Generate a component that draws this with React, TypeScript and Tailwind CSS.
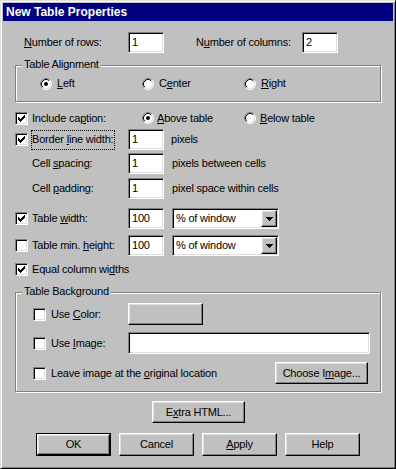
// App.tsx
// Win95-style "New Table Properties" dialog.

import React from "react";

const FONT = "font-['Liberation_Sans',Arial,sans-serif]";

// ── Shared bevel styles ──────────────────────────────────────────────────────
const field =
  "bg-white border border-t-[#808080] border-l-[#808080] border-r-white border-b-white shadow-[inset_1px_1px_0_#000,inset_-1px_-1px_0_#dfdfdf]";
const raised =
  "bg-[#c0c0c0] border border-t-white border-l-white border-r-black border-b-black shadow-[inset_-1px_-1px_0_#808080,inset_1px_1px_0_#dfdfdf]";

const CHECK = ["......#", ".....##", "#...###", "##.###.", "#####..", ".###...", "..#...."];

// ── Small pieces ─────────────────────────────────────────────────────────────
const U: React.FC<{ children: React.ReactNode }> = ({ children }) => (
  <span className="underline underline-offset-[1px]">{children}</span>
);

const CheckBox: React.FC<{ checked?: boolean }> = ({ checked }) => (
  <div className={`w-[13px] h-[13px] shrink-0 flex items-center justify-center ${field}`}>
    {checked && (
      <svg width="7" height="7" viewBox="0 0 7 7" shapeRendering="crispEdges">
        {CHECK.map((row, y) =>
          row.split("").map((c, x) =>
            c === "#" ? <rect key={`${x}-${y}`} x={x} y={y} width="1" height="1" fill="#000" /> : null
          )
        )}
      </svg>
    )}
  </div>
);

const Radio: React.FC<{ checked?: boolean }> = ({ checked }) => (
  <svg width="12" height="12" viewBox="0 0 12 12" className="shrink-0">
    <circle cx="6" cy="6" r="5" fill="#fff" />
    <path d="M2.11 9.89 A5.5 5.5 0 0 1 9.89 2.11" stroke="#808080" fill="none" />
    <path d="M9.89 2.11 A5.5 5.5 0 0 1 2.11 9.89" stroke="#fff" fill="none" />
    <path d="M2.82 9.18 A4.5 4.5 0 0 1 9.18 2.82" stroke="#000" fill="none" />
    <path d="M9.18 2.82 A4.5 4.5 0 0 1 2.82 9.18" stroke="#dfdfdf" fill="none" />
    {checked && <circle cx="6" cy="6" r="2" fill="#000" />}
  </svg>
);

const TextBox: React.FC<{ value?: string; w: string; h?: string }> = ({ value = "", w, h = "h-[21px]" }) => (
  <div className={`${w} ${h} shrink-0 flex items-center pl-[3px] ${field}`}>{value}</div>
);

const Select: React.FC<{ value: string }> = ({ value }) => (
  <div className={`w-[107px] h-[21px] ml-[8px] shrink-0 flex p-[1px] ${field}`}>
    <div className="flex-1 flex items-center pl-[2px]">{value}</div>
    <div className={`w-[16px] h-full flex items-center justify-center ${raised}`}>
      <svg width="7" height="4" viewBox="0 0 7 4" shapeRendering="crispEdges">
        <rect x="0" y="0" width="7" height="1" fill="#000" />
        <rect x="1" y="1" width="5" height="1" fill="#000" />
        <rect x="2" y="2" width="3" height="1" fill="#000" />
        <rect x="3" y="3" width="1" height="1" fill="#000" />
      </svg>
    </div>
  </div>
);

const Button: React.FC<{ children?: React.ReactNode; w: string; h?: string; def?: boolean }> = ({
  children,
  w,
  h = "h-[22px]",
  def,
}) =>
  def ? (
    <div className={`${w} ${h} shrink-0 flex border border-black`}>
      <div className={`flex-1 flex items-center justify-center ${raised}`}>
        <span>{children}</span>
      </div>
    </div>
  ) : (
    <div className={`${w} ${h} shrink-0 flex items-center justify-center ${raised}`}>
      <span>{children}</span>
    </div>
  );

const Group: React.FC<{ label: string; h: string; children: React.ReactNode }> = ({ label, h, children }) => (
  <div
    className={`relative ml-[12px] w-[366px] ${h} shrink-0 border border-[#808080] shadow-[1px_1px_0_#fff,inset_1px_1px_0_#fff]`}
  >
    <span className="absolute left-[6px] top-[-8px] px-[2px] bg-[#c0c0c0]">{label}</span>
    {children}
  </div>
);

// ─────────────────────────────────────────────────────────────────────────────
export default function App() {
  return (
    <div
      className={`w-[396px] h-[469px] bg-[#c0c0c0] text-black text-[11px] leading-[13px] tracking-[-0.2px] ${FONT} border border-t-[#dfdfdf] border-l-[#dfdfdf] border-r-black border-b-black shadow-[inset_1px_1px_0_#fff,inset_-1px_-1px_0_#808080] p-[2px] flex flex-col`}
    >
      {/* ── Title bar ── */}
      <div className="h-[18px] shrink-0 bg-[#000080] text-white text-[12px] font-bold flex items-center pl-[3px] tracking-normal">
        New Table Properties
      </div>

      {/* ── Rows / columns ── */}
      <div className="mt-[11px] h-[21px] flex items-center ml-[21px]">
        <span className="w-[104px]">
          <U>N</U>umber of rows:
        </span>
        <TextBox value="1" w="w-[36px]" />
        <span className="w-[32px]" />
        <span className="w-[106px]">
          N<U>u</U>mber of columns:
        </span>
        <TextBox value="2" w="w-[36px]" />
      </div>

      {/* ── Table alignment ── */}
      <div className="mt-[12px]">
        <Group label="Table Alignment" h="h-[37px]">
          <div className="h-full flex items-center ml-[24px]">
            <div className="w-[102px] flex items-center">
              <Radio checked />
              <span className="ml-[5px]">
                <U>L</U>eft
              </span>
            </div>
            <div className="w-[102px] flex items-center">
              <Radio />
              <span className="ml-[5px]">
                C<U>e</U>nter
              </span>
            </div>
            <div className="flex items-center">
              <Radio />
              <span className="ml-[5px]">
                <U>R</U>ight
              </span>
            </div>
          </div>
        </Group>
      </div>

      {/* ── Caption ── */}
      <div className="mt-[6px] h-[20px] flex items-center ml-[12px]">
        <div className="w-[127px] flex items-center">
          <CheckBox checked />
          <span className="ml-[4px]">
            Include ca<U>p</U>tion:
          </span>
        </div>
        <div className="w-[102px] flex items-center">
          <Radio checked />
          <span className="ml-[3px]">
            <U>A</U>bove table
          </span>
        </div>
        <div className="flex items-center">
          <Radio />
          <span className="ml-[4px]">
            <U>B</U>elow table
          </span>
        </div>
      </div>

      {/* ── Border / spacing / padding ── */}
      <div className="mt-[1px] h-[21px] flex items-center ml-[12px]">
        <div className="w-[113px] flex items-center">
          <CheckBox checked />
          <span className="ml-[3px] h-[20px] flex items-center border border-dotted border-black pr-[1px]">
            <span>
              Border <U>l</U>ine width:
            </span>
          </span>
        </div>
        <TextBox value="1" w="w-[36px]" />
        <span className="ml-[7px]">pixels</span>
      </div>

      <div className="mt-[3px] h-[21px] flex items-center ml-[12px]">
        <span className="w-[113px] pl-[17px]">
          Cell <U>s</U>pacing:
        </span>
        <TextBox value="1" w="w-[36px]" />
        <span className="ml-[8px]">pixels between cells</span>
      </div>

      <div className="mt-[4px] h-[21px] flex items-center ml-[12px]">
        <span className="w-[113px] pl-[17px]">
          Cell <U>p</U>adding:
        </span>
        <TextBox value="1" w="w-[36px]" />
        <span className="ml-[8px]">pixel space within cells</span>
      </div>

      {/* ── Width / height ── */}
      <div className="mt-[9px] h-[21px] flex items-center ml-[12px]">
        <div className="w-[113px] flex items-center">
          <CheckBox checked />
          <span className="ml-[4px]">
            Table <U>w</U>idth:
          </span>
        </div>
        <TextBox value="100" w="w-[36px]" />
        <Select value="% of window" />
      </div>

      <div className="mt-[6px] h-[21px] flex items-center ml-[12px]">
        <div className="w-[113px] flex items-center">
          <CheckBox />
          <span className="ml-[4px]">
            Table min. <U>h</U>eight:
          </span>
        </div>
        <TextBox value="100" w="w-[36px]" />
        <Select value="% of window" />
      </div>

      <div className="mt-[3px] h-[20px] flex items-center ml-[12px]">
        <CheckBox checked />
        <span className="ml-[4px]">
          Equal column wi<U>d</U>ths
        </span>
      </div>

      {/* ── Table background ── */}
      <div className="mt-[13px]">
        <Group label="Table Background" h="h-[100px]">
          <div className="flex flex-col ml-[17px]">
            <div className="mt-[10px] h-[22px] flex items-center">
              <div className="w-[95px] flex items-center">
                <CheckBox />
                <span className="ml-[5px]">
                  Use <U>C</U>olor:
                </span>
              </div>
              <Button w="w-[75px]" />
            </div>
            <div className="mt-[7px] h-[22px] flex items-center">
              <div className="w-[95px] flex items-center">
                <CheckBox />
                <span className="ml-[5px]">
                  Use <U>I</U>mage:
                </span>
              </div>
              <TextBox w="w-[242px]" h="h-[22px]" />
            </div>
            <div className="mt-[8px] h-[22px] flex items-center">
              <div className="w-[242px] flex items-center">
                <CheckBox />
                <span className="ml-[5px]">
                  Leave image at the <U>o</U>riginal location
                </span>
              </div>
              <Button w="w-[93px]">
                Choose I<U>m</U>age...
              </Button>
            </div>
          </div>
        </Group>
      </div>

      {/* ── Extra HTML ── */}
      <div className="mt-[9px] ml-[149px]">
        <Button w="w-[93px]">
          E<U>x</U>tra HTML...
        </Button>
      </div>

      {/* ── Dialog buttons ── */}
      <div className="mt-[10px] ml-[33px] flex gap-[8px]">
        <Button w="w-[75px]" h="h-[23px]" def>
          OK
        </Button>
        <Button w="w-[75px]" h="h-[23px]">
          Cancel
        </Button>
        <Button w="w-[75px]" h="h-[23px]">
          <U>A</U>pply
        </Button>
        <Button w="w-[75px]" h="h-[23px]">
          Help
        </Button>
      </div>
    </div>
  );
}
